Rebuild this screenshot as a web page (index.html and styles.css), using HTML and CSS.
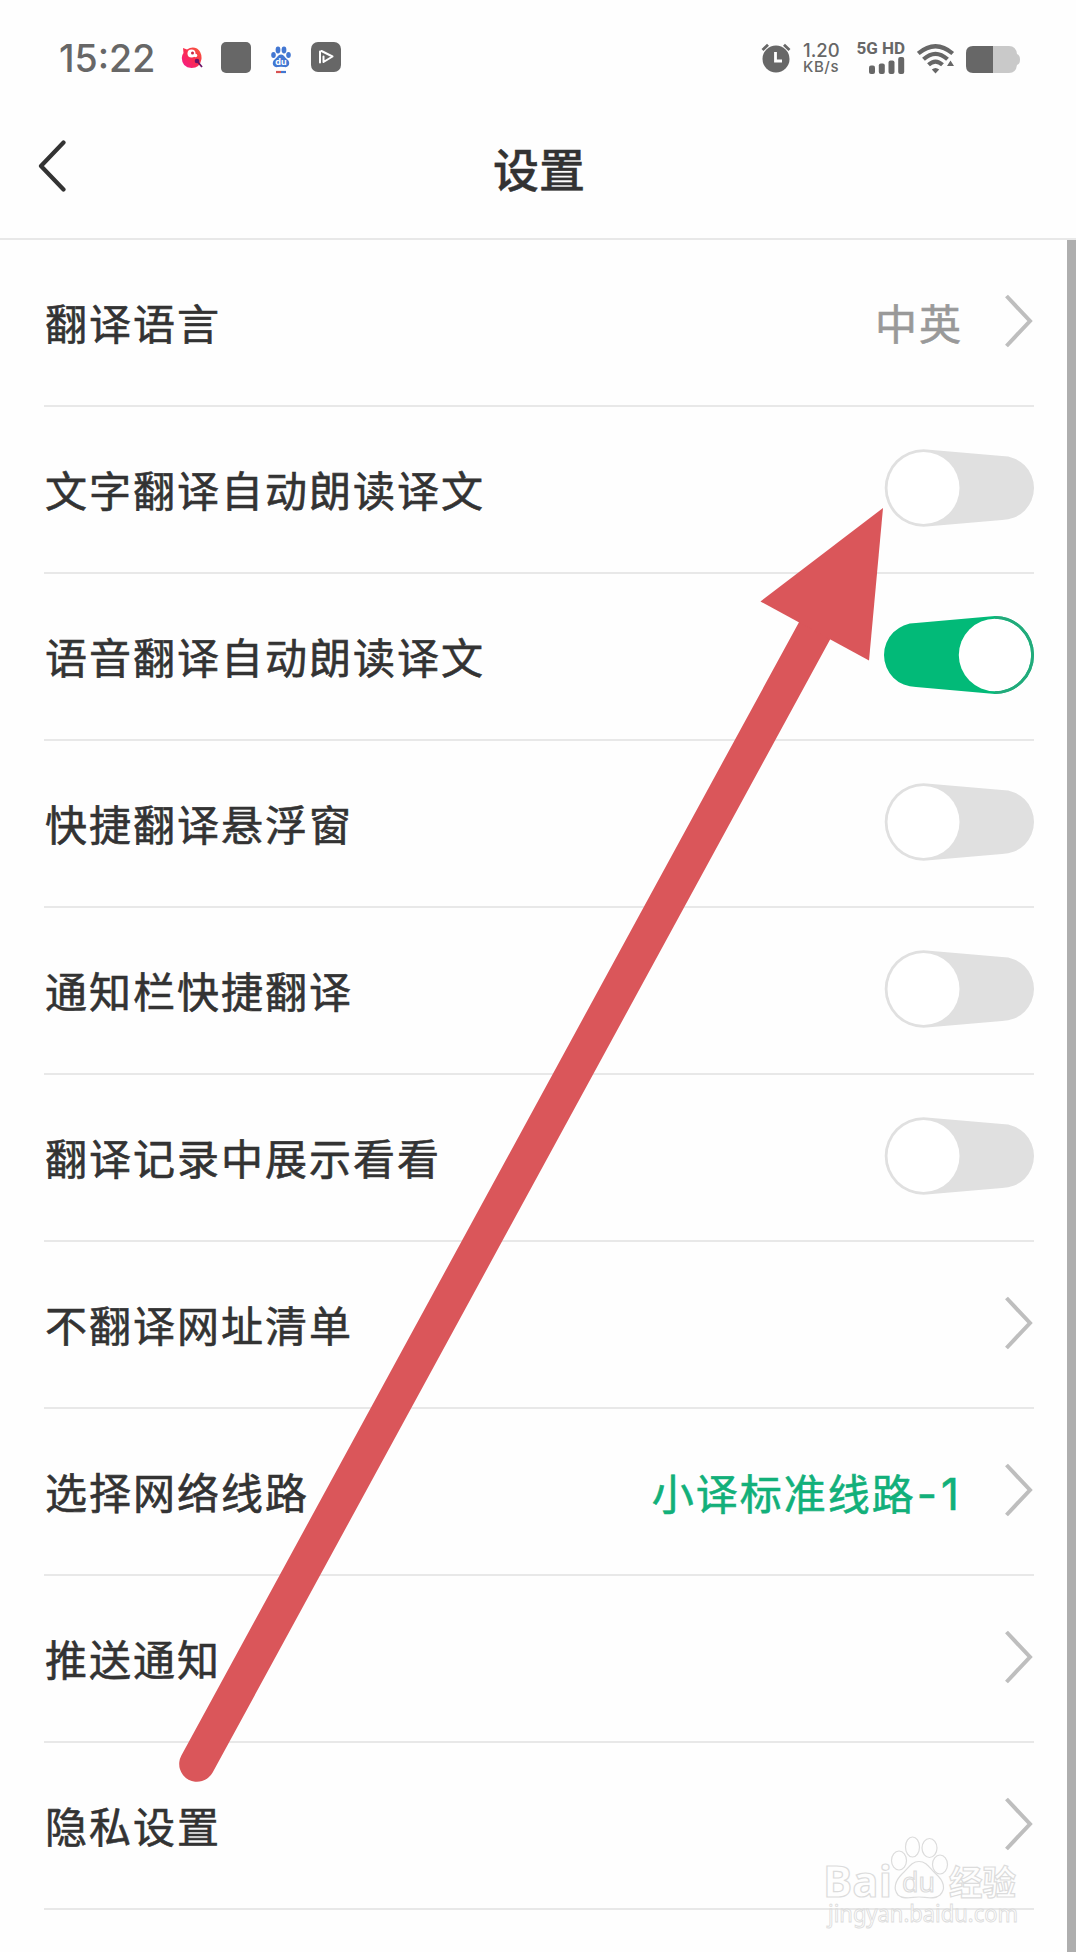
FILE: index.html
```html
<!DOCTYPE html>
<html lang="zh-CN">
<head>
    <meta charset="UTF-8">
    <meta name="viewport" content="width=device-width, initial-scale=1.0">
    <title>设置</title>
    <link rel="stylesheet" href="styles.css">
</head>
<body>
    <!-- shared icons -->
    <svg class="symbols" width="0" height="0">
        <symbol id="chevron" viewBox="0 0 29 54">
            <path d="M1.500 2 L25 27 L1.500 52" fill="none" stroke="#bebebe" stroke-width="4"/>
        </symbol>
        <symbol id="switch-off" viewBox="0 0 150 78">
            <path d="M39.500 .2 L118 7 A32 32 0 0 1 118 71 L39.500 77.800 A38.800 38.800 0 0 1 39.500 .2Z" fill="#e0e0e0"/>
            <circle cx="39.500" cy="39" r="36" fill="#fff"/>
        </symbol>
        <symbol id="switch-on" viewBox="0 0 150 78">
            <path d="M111 0 L32 7 A32 32 0 0 0 32 71 L111 78 A39 39 0 0 0 111 0Z" fill="#02ba78"/>
            <circle cx="111" cy="39" r="36.2" fill="#fff"/>
            <path d="M111 1.4 A37.6 37.6 0 0 1 111 76.6" fill="none" stroke="#22aa7b" stroke-width="2.8"/>
        </symbol>
    </svg>

    <div class="status-bar">
        <div class="status-left">
            <span class="time">15:22</span>
            <svg class="icon-karaoke" width="22" height="22" viewBox="0 0 22 22">
                <defs>
                    <linearGradient id="pink" x1="1" y1="0" x2="0" y2="1">
                        <stop offset="0" stop-color="#f5603a"/>
                        <stop offset=".5" stop-color="#fb2c50"/>
                        <stop offset="1" stop-color="#f41a92"/>
                    </linearGradient>
                </defs>
                <path d="M2 1 L6 2.5 Q11 -1 16 1.5 Q21 5 20.5 12 Q19 21 10.5 21 Q1 20.500 .8 11 Q.8 8 2.500 6Z" fill="url(#pink)"/>
                <circle cx="10.500" cy="6.500" r="4" fill="#fff"/>
                <circle cx="14.500" cy="8.500" r="1.800" fill="#fff"/>
                <circle cx="11.500" cy="6" r="1.500" fill="#c92845"/>
                <circle cx="16" cy="14" r="2.300" fill="#6a1267"/>
                <path d="M16 14 L21 20" stroke="#6a1267" stroke-width="1.800"/>
            </svg>
            <div class="icon-square"></div>
            <svg class="icon-paw" width="20" height="28" viewBox="0 0 20 28">
                <g fill="#4277d2">
                    <ellipse cx="2.500" cy="9" rx="2.300" ry="3"/>
                    <ellipse cx="7" cy="4" rx="2.400" ry="3.400"/>
                    <ellipse cx="13" cy="4" rx="2.400" ry="3.400"/>
                    <ellipse cx="17.500" cy="9" rx="2.300" ry="3"/>
                    <path d="M10 8.500 C13 8.500 14 12 17 14 C20 18 17 22 13 21 Q10 20.500 7 21 C3 22 0 18 3 14 C6 12 7 8.500 10 8.500Z"/>
                </g>
                <text x="10" y="19" class="paw-text">du</text>
                <path d="M5 26 H10" stroke="#d85252" stroke-width="2.200"/>
                <path d="M10 26 H15" stroke="#4277d2" stroke-width="2.200"/>
            </svg>
            <svg class="icon-play" width="30" height="30" viewBox="0 0 30 30">
                <rect width="30" height="30" rx="7" fill="#676767"/>
                <path d="M9 20.500 V9.500 M10.500 9 L21.500 14.500 L12.500 20 V14.500" fill="none" stroke="#fff" stroke-width="2" stroke-linejoin="round" stroke-linecap="round"/>
            </svg>
        </div>
        <div class="status-right">
            <svg class="icon-alarm" width="30" height="30" viewBox="0 0 30 30">
                <circle cx="15" cy="16" r="13.500" fill="#676767"/>
                <path d="M1.500 7 L7 1.800 M28.500 7 L23 1.800" stroke="#676767" stroke-width="2.800"/>
                <path d="M14.500 9 V18 H21" fill="none" stroke="#fff" stroke-width="2.800"/>
            </svg>
            <div class="speed">
                <span class="speed-value">1.20</span>
                <span class="speed-unit">KB/s</span>
            </div>
            <div class="signal">
                <span class="network">5G HD</span>
                <svg class="bars" width="36" height="17" viewBox="0 0 36 17" fill="#676767">
                    <rect x="0" y="8.500" width="6" height="8.500" rx="2"/>
                    <rect x="9.800" y="6.500" width="6" height="10.500" rx="2"/>
                    <rect x="19.500" y="3.500" width="6" height="13.500" rx="2"/>
                    <rect x="29.200" y="0" width="6" height="17" rx="2"/>
                </svg>
            </div>
            <svg class="icon-wifi" width="38" height="30" viewBox="0 0 38 30">
                <g fill="none" stroke="#676767" stroke-width="4.200">
                    <path d="M1.300 9.500 Q18.500 -5 35.700 9.500"/>
                    <path d="M6.500 15.300 Q18.500 4.500 30.500 15.300"/>
                    <path d="M11.500 20.800 Q18.500 14.500 25.500 20.800"/>
                </g>
                <path d="M14.800 25.500 Q18.500 22.500 22.200 25.500 L18.500 29.500Z M33.500 16.500 L37 22 H30Z" fill="#676767"/>
            </svg>
            <svg class="icon-battery" width="54" height="27" viewBox="0 0 54 27">
                <path d="M27 0 H43 Q50 0 51 8 Q54 9 54 13.500 Q54 18 51 19 Q50 27 43 27 H27Z" fill="#c9c9c9"/>
                <path d="M27 0 H7 Q0 0 0 7 V20 Q0 27 7 27 H27Z" fill="#676767"/>
            </svg>
        </div>
    </div>

    <div class="nav-bar">
        <svg class="back" width="28" height="52" viewBox="0 0 28 52">
            <path d="M25.500 2.500 L3 26 L25.500 49.500" fill="none" stroke="#333" stroke-width="4.200" stroke-linecap="round" stroke-linejoin="round"/>
        </svg>
        <h1>设置</h1>
    </div>

    <div class="settings">
        <div class="row">
            <span class="label">翻译语言</span>
            <span class="value">中英</span>
            <svg class="chevron"><use href="#chevron"/></svg>
        </div>
        <div class="row">
            <span class="label">文字翻译自动朗读译文</span>
            <svg class="switch"><use href="#switch-off"/></svg>
        </div>
        <div class="row">
            <span class="label">语音翻译自动朗读译文</span>
            <svg class="switch"><use href="#switch-on"/></svg>
        </div>
        <div class="row">
            <span class="label">快捷翻译悬浮窗</span>
            <svg class="switch"><use href="#switch-off"/></svg>
        </div>
        <div class="row">
            <span class="label">通知栏快捷翻译</span>
            <svg class="switch"><use href="#switch-off"/></svg>
        </div>
        <div class="row">
            <span class="label">翻译记录中展示看看</span>
            <svg class="switch"><use href="#switch-off"/></svg>
        </div>
        <div class="row">
            <span class="label">不翻译网址清单</span>
            <svg class="chevron"><use href="#chevron"/></svg>
        </div>
        <div class="row">
            <span class="label">选择网络线路</span>
            <span class="value green">小译标准线路<span class="line-no">-1</span></span>
            <svg class="chevron"><use href="#chevron"/></svg>
        </div>
        <div class="row">
            <span class="label">推送通知</span>
            <svg class="chevron"><use href="#chevron"/></svg>
        </div>
        <div class="row">
            <span class="label">隐私设置</span>
            <svg class="chevron"><use href="#chevron"/></svg>
        </div>
    </div>
    <div class="scrollbar"></div>

    <!-- arrow pointing at the first switch -->
    <svg class="overlay" width="1076" height="1952" viewBox="0 0 1076 1952">
        <path d="M197 1764 L815 630" stroke="#da565a" stroke-width="35.6" stroke-linecap="round"/>
        <path d="M883 508 L760.500 601.500 L869 660.500Z" fill="#da565a"/>
    </svg>

    <!-- watermark -->
    <svg class="watermark" width="210" height="104" viewBox="820 1832 210 104">
        <g fill="#fff" stroke="#d9d9d9" stroke-width="1.200">
            <ellipse cx="899" cy="1860.500" rx="7.500" ry="9.500"/>
            <ellipse cx="912.500" cy="1847" rx="7" ry="10"/>
            <ellipse cx="929.500" cy="1848" rx="7.500" ry="9.500"/>
            <ellipse cx="940" cy="1864.500" rx="7.500" ry="9.500"/>
            <path d="M919 1861.500 C927 1861.500 930 1869 936 1874 C944 1881 946 1889 940 1895 C934 1900 926 1897 919 1897 C912 1897 904 1900 898 1895 C893 1889 895 1881 902 1874 C908 1869 911 1861.500 919 1861.500Z"/>
            <text x="823" y="1896.500" class="wm-logo" textLength="69" lengthAdjust="spacingAndGlyphs">Bai</text>
            <text x="902" y="1892" class="wm-du" textLength="33" lengthAdjust="spacingAndGlyphs">du</text>
            <text x="949" y="1894.500" class="wm-cn" textLength="67" lengthAdjust="spacingAndGlyphs">经验</text>
            <text x="828" y="1922" class="wm-url" textLength="190" lengthAdjust="spacingAndGlyphs">jingyan.baidu.com</text>
        </g>
    </svg>
</body>
</html>
```

FILE: styles.css
```css
* {
    box-sizing: border-box;
}
body {
    margin: 0;
    position: relative;
    height: 1952px;
    overflow: hidden;
    background-color: #fefefe;
    color: #333;
    font-family: Inter, "Noto Sans CJK SC", sans-serif;
}
svg {
    display: block;
    flex-shrink: 0;
}
.symbols {
    position: absolute;
}

/* status bar */
.status-bar {
    display: flex;
    justify-content: space-between;
    height: 104px;
    padding: 42px 57px 0 59px;
    color: #676767;
}
.status-left, .status-right {
    display: flex;
    align-items: flex-start;
}
.time {
    width: 97px;
    padding-top: 1px;
    font-size: 37.5px;
    font-weight: 500;
    line-height: 32px;
    white-space: nowrap;
}
.icon-karaoke {
    margin: 5px 0 0 25px;
}
.icon-square {
    width: 30px;
    height: 31px;
    margin-left: 18px;
    border-radius: 5px;
    background-color: #676767;
}
.icon-paw {
    margin: 4px 0 0 20px;
}
.paw-text {
    fill: #fff;
    font-size: 9px;
    font-weight: 700;
    text-anchor: middle;
}
.icon-play {
    margin-left: 20px;
}
.icon-alarm {
    margin-top: 1px;
}
.speed {
    display: flex;
    flex-direction: column;
    width: 40px;
    margin-left: 12px;
    font-weight: 500;
    white-space: nowrap;
}
.speed-value {
    font-size: 18.5px;
    line-height: 17px;
}
.speed-unit {
    font-size: 15px;
    letter-spacing: 0.6px;
    line-height: 16px;
}
.signal {
    display: flex;
    flex-direction: column;
    align-items: flex-end;
    width: 50px;
    margin-left: 12px;
}
.network {
    font-family: Roboto, sans-serif;
    font-size: 17px;
    font-weight: 700;
    line-height: 13px;
    white-space: nowrap;
}
.bars {
    margin-top: 2px;
}
.icon-wifi {
    margin: 2px 0 0 12px;
}
.icon-battery {
    margin: 4px -1px 0 11px;
}

/* title bar */
.nav-bar {
    display: grid;
    grid-template-columns: 38px 1fr 38px;
    align-items: center;
    height: 136px;
    padding: 0 36px 0 38px;
    border-bottom: 2px solid #e8e8e8;
}
.back {
    margin-bottom: 10px;
}
h1 {
    margin: 0;
    padding-bottom: 3px;
    font-size: 46px;
    font-weight: 500;
    line-height: 60px;
    text-align: center;
    -webkit-text-stroke: 0.4px;
}

/* settings list */
.settings {
    padding: 0 42px 0 44px;
}
.row {
    display: flex;
    align-items: center;
    height: 167px;
    border-bottom: 2px solid #e8e8e8;
}
.label, .value {
    padding-top: 5px;
    font-size: 42px;
    letter-spacing: 2px;
    line-height: 60px;
    white-space: nowrap;
    -webkit-text-stroke: 0.6px;
}
.label {
    flex: 1;
    padding-left: 1px;
}
.value {
    color: #999;
}
.value.green {
    color: #12b07a;
}
.line-no {
    margin-left: 1px;
    font-size: 44px;
    letter-spacing: 4px;
}
.chevron {
    width: 29px;
    height: 54px;
    margin: 0 0 3px 42px;
}
.switch {
    width: 150px;
    height: 78px;
    margin-bottom: 3px;
}

.scrollbar {
    position: absolute;
    top: 240px;
    right: 0;
    bottom: 0;
    width: 9px;
    background-color: #aeaeae;
}
.overlay {
    position: absolute;
    top: 0;
    left: 0;
}
.watermark {
    position: absolute;
    left: 820px;
    top: 1832px;
    overflow: visible;
    opacity: 0.9;
}
.wm-logo {
    font-family: "Open Sans", sans-serif;
    font-size: 43px;
    font-weight: 700;
}
.wm-du {
    font-family: "Open Sans", sans-serif;
    font-size: 27px;
}
.wm-cn {
    font-family: "Noto Sans CJK SC", sans-serif;
    font-size: 34px;
    font-weight: 700;
}
.wm-url {
    font-family: "Noto Sans", sans-serif;
    font-size: 24px;
    stroke-width: 0.9px;
}
```
